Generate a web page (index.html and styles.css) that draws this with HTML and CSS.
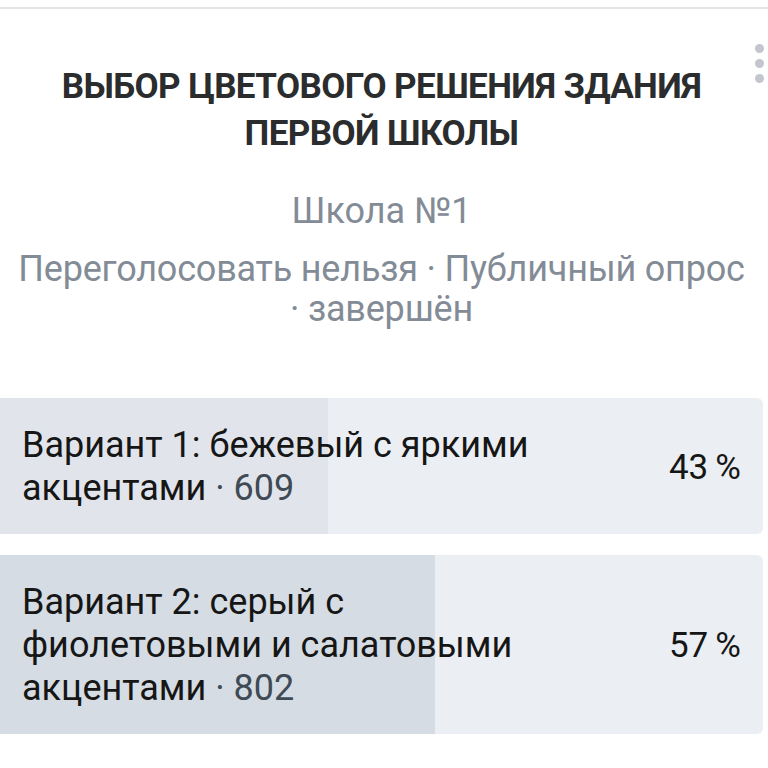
FILE: index.html
```html
<!DOCTYPE html>
<html lang="ru">
<head>
<meta charset="utf-8">
<link rel="stylesheet" href="styles.css">
</head>
<body>
<div class="topline"></div>
<div class="card">
  <div class="menu"><span></span><span></span><span></span></div>
  <h1 class="title">ВЫБОР ЦВЕТОВОГО РЕШЕНИЯ ЗДАНИЯ ПЕРВОЙ ШКОЛЫ</h1>
  <div class="author">Школа №1</div>
  <div class="meta">Переголосовать нельзя · Публичный опрос ·&nbsp;завершён</div>
  <div class="options">
    <div class="option">
      <div class="fill fill-a" style="width:43%"></div>
      <div class="label">Вариант 1: бежевый с яркими акцентами <span class="count">·&nbsp;609</span></div>
      <div class="pct">43&#8201;%</div>
    </div>
    <div class="option">
      <div class="fill fill-b" style="width:57%"></div>
      <div class="label">Вариант 2: серый с фиолетовыми и салатовыми акцентами <span class="count">·&nbsp;802</span></div>
      <div class="pct">57&#8201;%</div>
    </div>
  </div>
</div>
</body>
</html>
```
FILE: styles.css
```css
* { box-sizing: border-box; }
html, body { margin: 0; padding: 0; background: #ffffff; }
body {
  font-family: Roboto, "Noto Sans", sans-serif;
  color: #1f1f1f;
  width: 768px;
  height: 768px;
  overflow: hidden;
}
.topline {
  height: 9px;
  border-bottom: 2px solid #e3e4e6;
}
.card {
  position: relative;
  width: 763px;
  padding-top: 54px;
}
.menu {
  position: absolute;
  right: -1px;
  top: 35px;
  display: flex;
  flex-direction: column;
  gap: 6px;
}
.menu span {
  width: 9px;
  height: 9px;
  border-radius: 50%;
  background: #c3c7cd;
}
.title {
  margin: 0 auto;
  width: 680px;
  text-align: center;
  font-size: 35px;
  font-weight: 700;
  line-height: 47px;
  color: #2b2c2d;
  letter-spacing: -0.6px;
}
.author {
  margin-top: 34px;
  text-align: center;
  font-size: 36px;
  line-height: 40px;
  color: #838c96;
}
.meta {
  margin: 18px auto 0;
  width: 750px;
  text-align: center;
  font-size: 36px;
  line-height: 40px;
  letter-spacing: -0.2px;
  color: #838c96;
}
.options {
  margin-top: 69px;
  display: flex;
  flex-direction: column;
  gap: 21px;
}
.option {
  position: relative;
  display: flex;
  align-items: center;
  justify-content: space-between;
  background: #ebeef2;
  border-radius: 0 6px 6px 0;
  padding: 26px 22px 24px 22px;
  overflow: hidden;
}
.fill {
  position: absolute;
  left: 0;
  top: 0;
  bottom: 0;
}
.fill-a { background: #e1e5eb; }
.fill-b { background: #d5dce3; }
.label {
  position: relative;
  font-size: 36px;
  line-height: 43px;
  color: #161616;
  max-width: 560px;
}
.count { color: #3f4a55; }
.pct {
  position: relative;
  font-size: 35px;
  color: #161616;
}
```
